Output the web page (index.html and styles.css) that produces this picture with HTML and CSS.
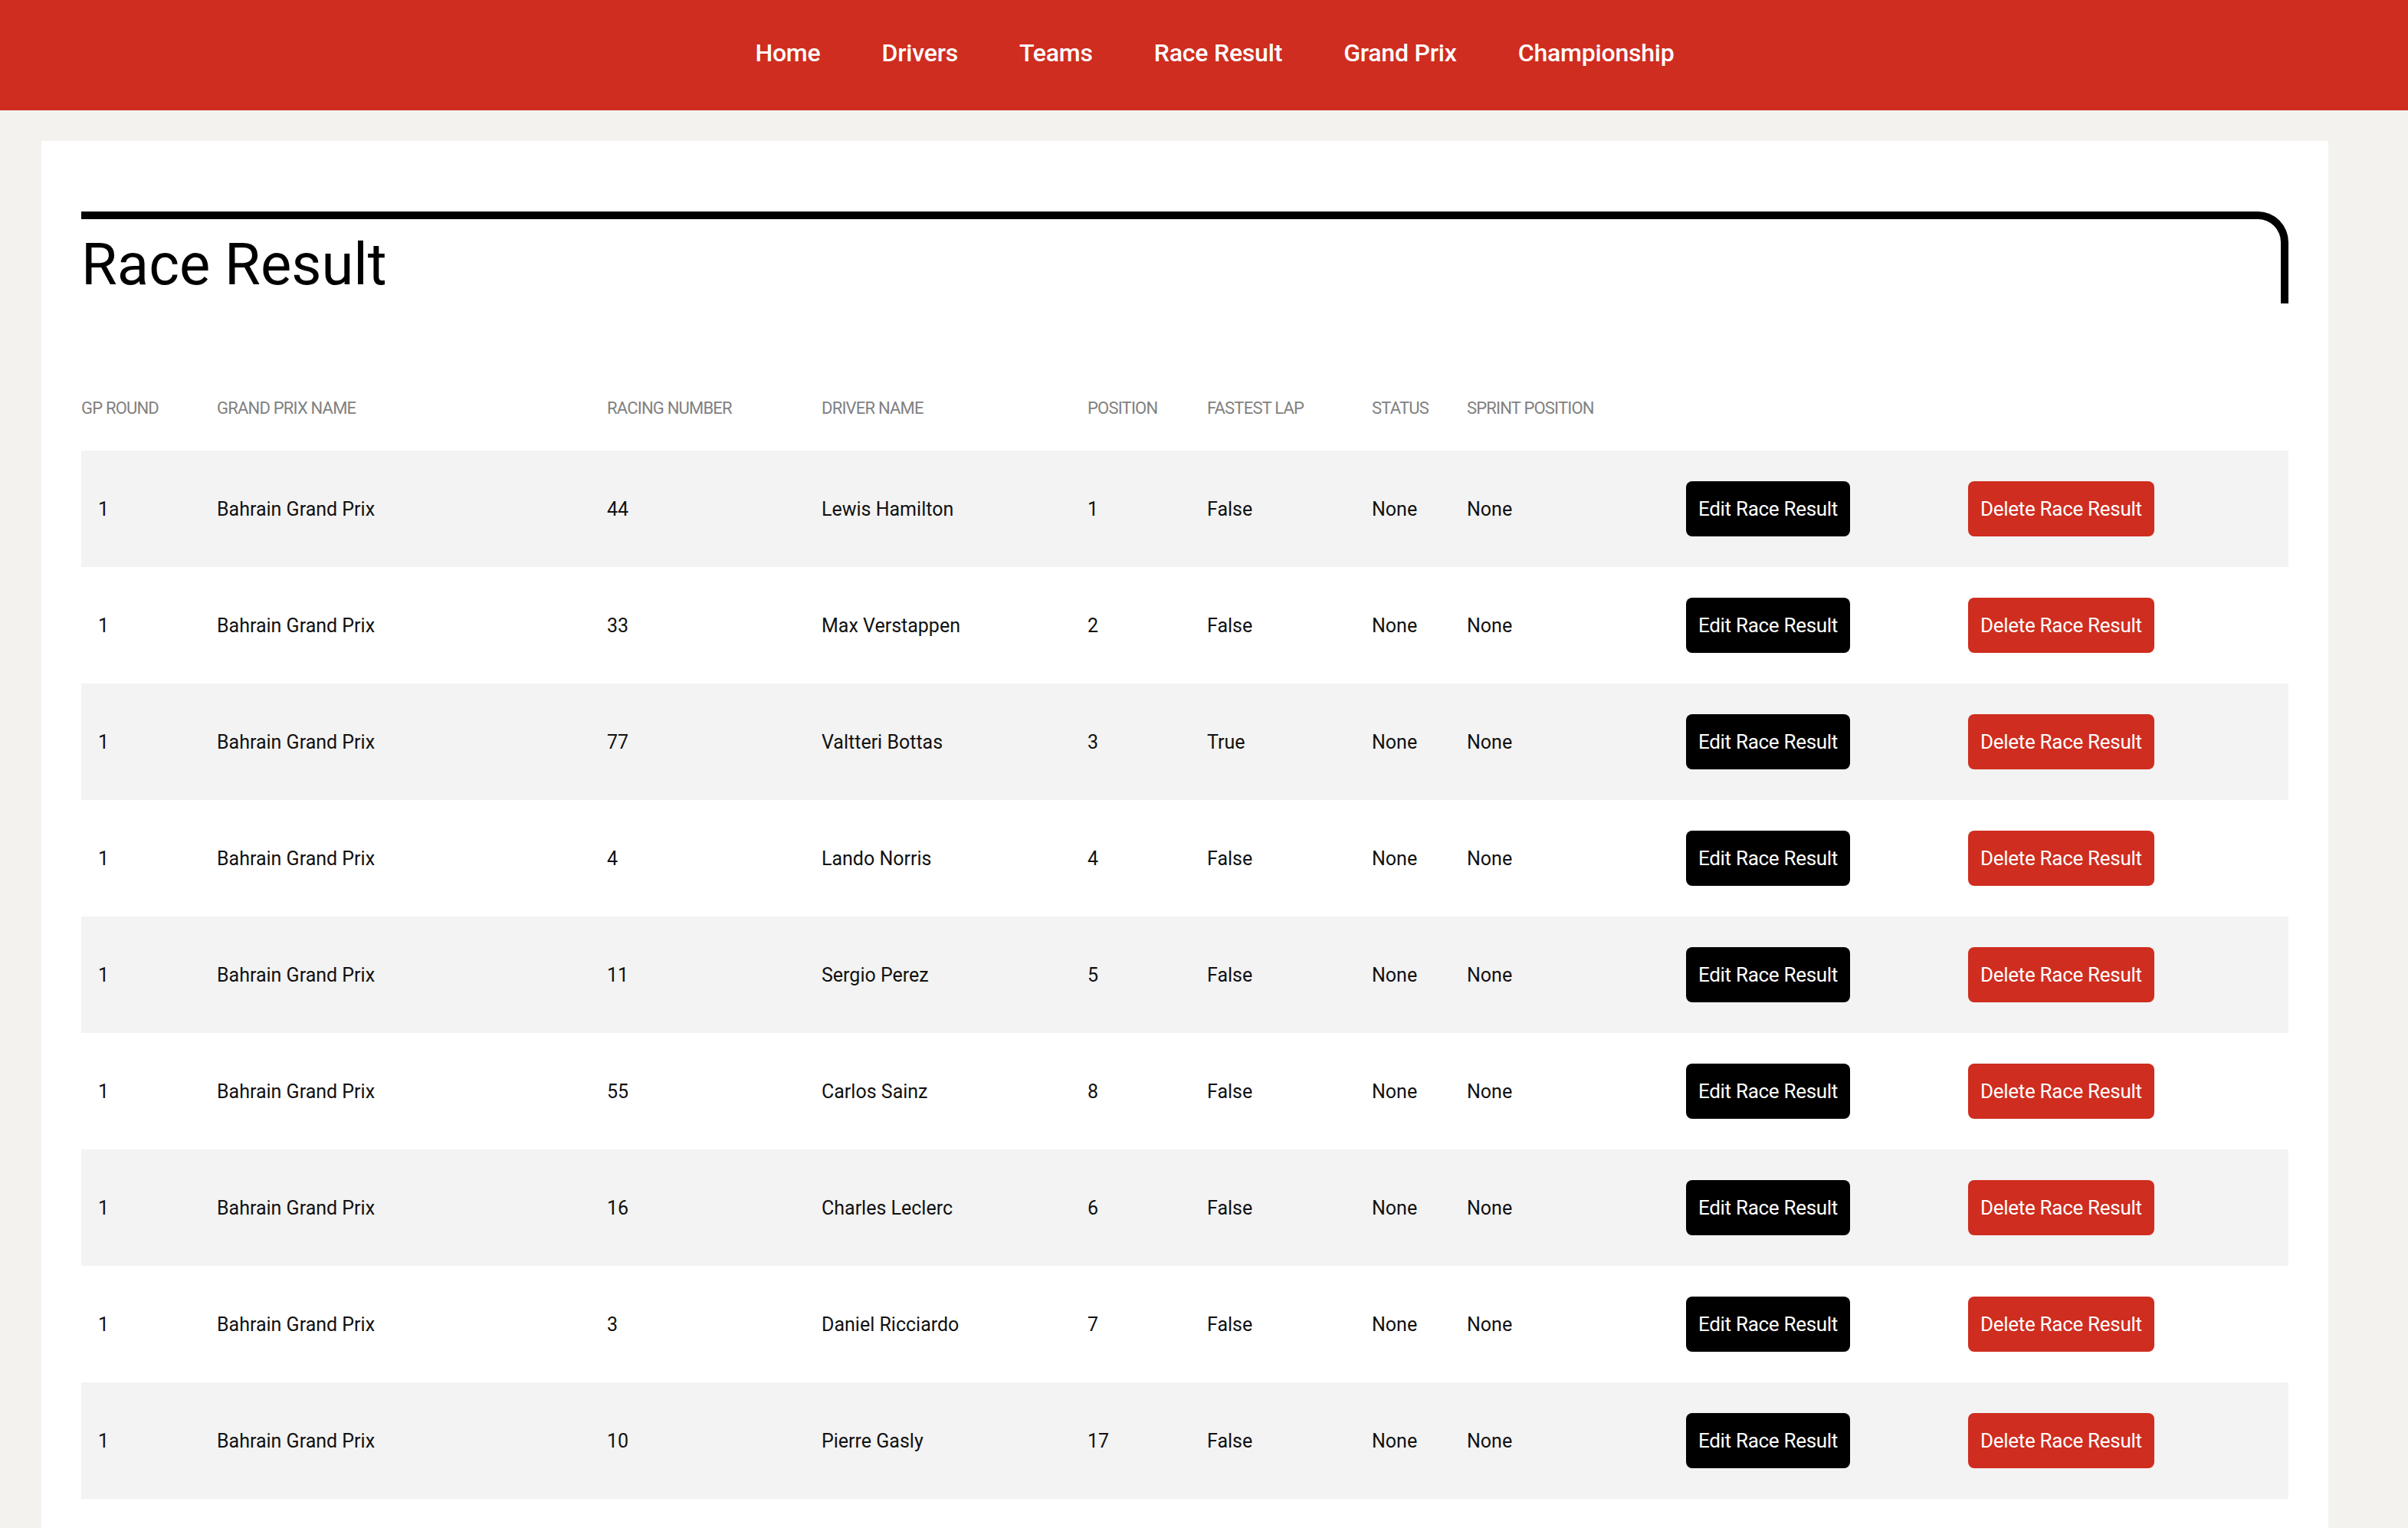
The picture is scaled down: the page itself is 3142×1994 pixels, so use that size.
FILE: index.html
```html
<!DOCTYPE html>
<html lang="en">
<head>
<meta charset="utf-8">
<title>Race Result</title>
<link rel="stylesheet" href="styles.css">
</head>
<body>
<header class="topbar">
  <nav>
    <ul class="nav">
      <li><a href="#">Home</a></li>
      <li><a href="#">Drivers</a></li>
      <li><a href="#">Teams</a></li>
      <li><a href="#">Race Result</a></li>
      <li><a href="#">Grand Prix</a></li>
      <li><a href="#">Championship</a></li>
    </ul>
  </nav>
</header>
<main class="card">
  <div class="title-box">
    <h1>Race Result</h1>
  </div>
  <table class="results">
    <colgroup>
      <col class="c1"><col class="c2"><col class="c3"><col class="c4"><col class="c5">
      <col class="c6"><col class="c7"><col class="c8"><col class="c9"><col class="c10">
    </colgroup>
    <thead>
      <tr>
        <th>GP ROUND</th><th>GRAND PRIX NAME</th><th>RACING NUMBER</th><th>DRIVER NAME</th><th>POSITION</th><th>FASTEST LAP</th><th>STATUS</th><th>SPRINT POSITION</th><th></th><th></th>
      </tr>
    </thead>
    <tbody>
      <tr><td class="first">1</td><td>Bahrain Grand Prix</td><td>44</td><td>Lewis Hamilton</td><td>1</td><td>False</td><td>None</td><td>None</td><td><a class="btn btn-edit" href="#">Edit Race Result</a></td><td><a class="btn btn-delete" href="#">Delete Race Result</a></td></tr>
      <tr><td class="first">1</td><td>Bahrain Grand Prix</td><td>33</td><td>Max Verstappen</td><td>2</td><td>False</td><td>None</td><td>None</td><td><a class="btn btn-edit" href="#">Edit Race Result</a></td><td><a class="btn btn-delete" href="#">Delete Race Result</a></td></tr>
      <tr><td class="first">1</td><td>Bahrain Grand Prix</td><td>77</td><td>Valtteri Bottas</td><td>3</td><td>True</td><td>None</td><td>None</td><td><a class="btn btn-edit" href="#">Edit Race Result</a></td><td><a class="btn btn-delete" href="#">Delete Race Result</a></td></tr>
      <tr><td class="first">1</td><td>Bahrain Grand Prix</td><td>4</td><td>Lando Norris</td><td>4</td><td>False</td><td>None</td><td>None</td><td><a class="btn btn-edit" href="#">Edit Race Result</a></td><td><a class="btn btn-delete" href="#">Delete Race Result</a></td></tr>
      <tr><td class="first">1</td><td>Bahrain Grand Prix</td><td>11</td><td>Sergio Perez</td><td>5</td><td>False</td><td>None</td><td>None</td><td><a class="btn btn-edit" href="#">Edit Race Result</a></td><td><a class="btn btn-delete" href="#">Delete Race Result</a></td></tr>
      <tr><td class="first">1</td><td>Bahrain Grand Prix</td><td>55</td><td>Carlos Sainz</td><td>8</td><td>False</td><td>None</td><td>None</td><td><a class="btn btn-edit" href="#">Edit Race Result</a></td><td><a class="btn btn-delete" href="#">Delete Race Result</a></td></tr>
      <tr><td class="first">1</td><td>Bahrain Grand Prix</td><td>16</td><td>Charles Leclerc</td><td>6</td><td>False</td><td>None</td><td>None</td><td><a class="btn btn-edit" href="#">Edit Race Result</a></td><td><a class="btn btn-delete" href="#">Delete Race Result</a></td></tr>
      <tr><td class="first">1</td><td>Bahrain Grand Prix</td><td>3</td><td>Daniel Ricciardo</td><td>7</td><td>False</td><td>None</td><td>None</td><td><a class="btn btn-edit" href="#">Edit Race Result</a></td><td><a class="btn btn-delete" href="#">Delete Race Result</a></td></tr>
      <tr><td class="first">1</td><td>Bahrain Grand Prix</td><td>10</td><td>Pierre Gasly</td><td>17</td><td>False</td><td>None</td><td>None</td><td><a class="btn btn-edit" href="#">Edit Race Result</a></td><td><a class="btn btn-delete" href="#">Delete Race Result</a></td></tr>
    </tbody>
  </table>
</main>
</body>
</html>
```

FILE: styles.css
```css
* { box-sizing: border-box; }

body {
  margin: 0;
  background: #f3f2ee;
  font-family: Roboto, "Liberation Sans", sans-serif;
  color: #111;
}

.topbar {
  height: 144px;
  background: #cf2d1f;
  display: flex;
  align-items: center;
  justify-content: center;
  padding-bottom: 6px;
}

.nav {
  list-style: none;
  margin: 0;
  padding: 0 0 0 28px;
  display: flex;
  gap: 80px;
}

.nav a {
  color: #fff;
  text-decoration: none;
  font-size: 32px;
  font-weight: 500;
  letter-spacing: -0.2px;
}

.card {
  display: block;
  margin: 40px 0 0 54px;
  width: 2984px;
  background: #fff;
  padding: 92px 52px 52px;
}

.title-box {
  height: 120px;
  border-top: 10px solid #000;
  border-right: 10px solid #000;
  border-top-right-radius: 40px;
}

.title-box h1 {
  margin: 21px 0 0;
  font-size: 76px;
  line-height: 1;
  font-weight: 400;
  color: #000;
}

.results {
  margin-top: 80px;
  width: 100%;
  table-layout: fixed;
  border-collapse: collapse;
}

.c1 { width: 177px; }
.c2 { width: 509px; }
.c3 { width: 280px; }
.c4 { width: 347px; }
.c5 { width: 156px; }
.c6 { width: 215px; }
.c7 { width: 124px; }
.c8 { width: 286px; }
.c9 { width: 368px; }
.c10 { width: 418px; }

.results th {
  height: 112px;
  padding: 0;
  text-align: left;
  vertical-align: middle;
  font-size: 22px;
  font-weight: 400;
  letter-spacing: -0.8px;
  color: #818181;
  white-space: nowrap;
}

.results td {
  height: 152px;
  padding: 0;
  vertical-align: middle;
  font-size: 25px;
  color: #111;
  white-space: nowrap;
}

.results td.first { padding-left: 22px; }

.results tbody tr:nth-child(odd) { background: #f3f3f3; }

.btn {
  display: inline-block;
  height: 72px;
  line-height: 72px;
  padding: 0 16px;
  border-radius: 8px;
  color: #fff;
  text-decoration: none;
  font-size: 26px;
  letter-spacing: -0.3px;
}

.btn-edit { background: #000; }
.btn-delete { background: #cf2d1f; }
```
